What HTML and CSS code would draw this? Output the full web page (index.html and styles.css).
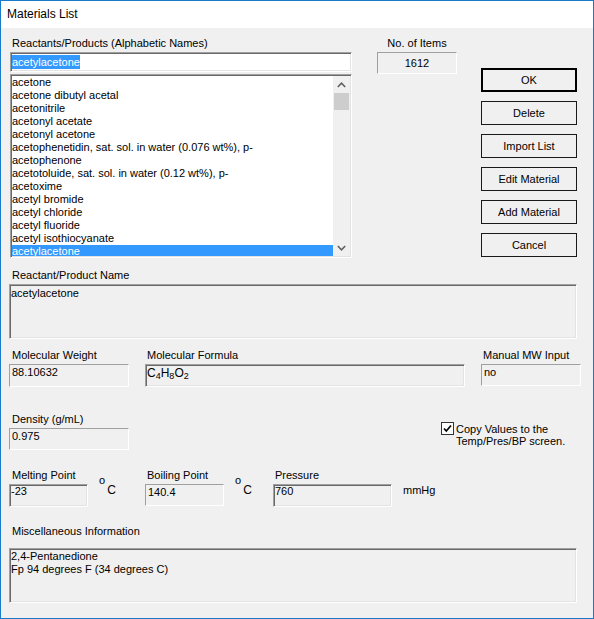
FILE: index.html
```html
<!DOCTYPE html>
<html>
<head>
<meta charset="utf-8">
<title>Materials List</title>
<link rel="stylesheet" href="styles.css">
</head>
<body>
<div class="window">
  <div class="titlebar">Materials List</div>
  <div class="content">
    <div class="top">
      <div class="listcol">
        <div class="lbl">Reactants/Products (Alphabetic Names)</div>
        <div class="combo-input sunken"><span class="sel">acetylacetone</span></div>
        <div class="list sunken">
          <div class="items">
            <div class="item">acetone</div>
            <div class="item">acetone dibutyl acetal</div>
            <div class="item">acetonitrile</div>
            <div class="item">acetonyl acetate</div>
            <div class="item">acetonyl acetone</div>
            <div class="item">acetophenetidin, sat. sol. in water (0.076 wt%), p-</div>
            <div class="item">acetophenone</div>
            <div class="item">acetotoluide, sat. sol. in water (0.12 wt%), p-</div>
            <div class="item">acetoxime</div>
            <div class="item">acetyl bromide</div>
            <div class="item">acetyl chloride</div>
            <div class="item">acetyl fluoride</div>
            <div class="item">acetyl isothiocyanate</div>
            <div class="item selected">acetylacetone</div>
          </div>
          <div class="scroll">
            <div class="sbtn"><svg width="9" height="6" viewBox="0 0 9 6"><polyline points="0.8,5 4.5,1.2 8.2,5" fill="none" stroke="#606060" stroke-width="1.6"/></svg></div>
            <div class="thumb"></div>
            <div class="track"></div>
            <div class="sbtn"><svg width="9" height="6" viewBox="0 0 9 6"><polyline points="0.8,1 4.5,4.8 8.2,1" fill="none" stroke="#606060" stroke-width="1.6"/></svg></div>
          </div>
        </div>
      </div>
      <div class="countcol">
        <div class="lbl center">No. of Items</div>
        <div class="countbox static">1612</div>
      </div>
      <div class="btncol">
        <div class="btn default">OK</div>
        <div class="btn">Delete</div>
        <div class="btn">Import List</div>
        <div class="btn">Edit Material</div>
        <div class="btn">Add Material</div>
        <div class="btn">Cancel</div>
      </div>
    </div>

    <div class="flabel name-lbl">Reactant/Product Name</div>
    <div class="bigbox sunken">acetylacetone</div>

    <div class="row row2">
      <div class="group w120">
        <div class="flabel">Molecular Weight</div>
        <div class="vbox static h23">88.10632</div>
      </div>
      <div class="group w320 ml16">
        <div class="flabel l2">Molecular Formula</div>
        <div class="vbox sunken h23 formula">C<sub>4</sub>H<sub>8</sub>O<sub>2</sub></div>
      </div>
      <div class="group w100 ml16">
        <div class="flabel l2">Manual MW Input</div>
        <div class="vbox static h22">no</div>
      </div>
    </div>

    <div class="row row3">
      <div class="group w120">
        <div class="flabel">Density (g/mL)</div>
        <div class="vbox static h22">0.975</div>
      </div>
      <div class="check">
        <svg class="cbox" width="13" height="13" viewBox="0 0 13 13"><rect x="0.5" y="0.5" width="12" height="12" fill="#fff" stroke="#333"/><polyline points="3,6.5 5.3,9 10,3.5" fill="none" stroke="#000" stroke-width="1.7"/></svg>
        <div class="ctext">Copy Values to the<br>Temp/Pres/BP screen.</div>
      </div>
    </div>

    <div class="row row4">
      <div class="group w79">
        <div class="flabel">Melting Point</div>
        <div class="vbox sunken h23 tight">-23</div>
      </div>
      <div class="unit u57"><span class="deg">o</span><span class="cc">C</span></div>
      <div class="group w79">
        <div class="flabel l2">Boiling Point</div>
        <div class="vbox static h22">140.4</div>
      </div>
      <div class="unit u49"><span class="deg">o</span><span class="cc">C</span></div>
      <div class="group w119">
        <div class="flabel l2">Pressure</div>
        <div class="vbox sunken h23 tight">760</div>
      </div>
      <div class="mmhg">mmHg</div>
    </div>

    <div class="flabel misc-lbl">Miscellaneous Information</div>
    <div class="bigbox sunken misc">2,4-Pentanedione<br>Fp 94 degrees F (34 degrees C)</div>
  </div>
</div>
</body>
</html>
```

FILE: styles.css
```css
* { box-sizing: border-box; }
body {
  margin: 0;
  font-family: "Liberation Sans", Arial, sans-serif;
  font-size: 11px;
  line-height: 13px;
  color: #000;
  background: #fff;
}
.window {
  width: 594px;
  height: 619px;
  border: 1px solid #1979ca;
  background: #f0f0f0;
  display: flex;
  flex-direction: column;
  overflow: hidden;
}
.titlebar {
  height: 27px;
  flex: none;
  background: #fff;
  padding-left: 6px;
  font-size: 12px;
  display: flex;
  align-items: center;
}
.content {
  flex: 1;
  padding-left: 8px;
}
.sunken {
  border: 1px solid;
  border-color: #a0a0a0 #fff #fff #a0a0a0;
  box-shadow: inset 1px 1px 0 #696969, inset -1px -1px 0 #e3e3e3;
  padding: 1px;
}
.static {
  border: 1px solid;
  border-color: #a0a0a0 #fff #fff #a0a0a0;
}
.top {
  display: flex;
  align-items: flex-start;
  margin-top: 9px;
}
.listcol {
  margin-left: 1px;
  width: 342px;
}
.lbl {
  height: 13px;
  padding-left: 2px;
  white-space: nowrap;
}
.lbl.center { text-align: center; padding-left: 0; }
.combo-input {
  margin-top: 2px;
  height: 20px;
  background: #fff;
  padding-top: 2px;
}
.sel {
  background: #3399ff;
  color: #fff;
  display: inline-block;
  line-height: 14px;
}
.list {
  margin-top: 2px;
  height: 184px;
  background: #fff;
  display: flex;
  overflow: hidden;
}
.items {
  flex: 1;
  overflow: hidden;
}
.item {
  height: 13px;
  white-space: nowrap;
  padding-left: 0;
}
.item.selected {
  background: #3399ff;
  color: #fff;
}
.scroll {
  width: 17px;
  flex: none;
  background: #f0f0f0;
  display: flex;
  flex-direction: column;
}
.sbtn {
  height: 17px;
  flex: none;
  display: flex;
  align-items: center;
  justify-content: center;
}
.thumb {
  height: 17px;
  flex: none;
  background: #cdcdcd;
  margin: 0 1px;
}
.track { flex: 1; }
.countcol {
  margin-left: 25px;
  width: 80px;
}
.countbox {
  margin-top: 2px;
  height: 22px;
  text-align: center;
  line-height: 20px;
}
.btncol {
  margin-left: 24px;
  padding-top: 31px;
  display: flex;
  flex-direction: column;
  gap: 9px;
}
.btn {
  width: 96px;
  height: 24px;
  border: 1px solid #1a1a1a;
  background: #f0f0f0;
  display: flex;
  align-items: center;
  justify-content: center;
}
.btn.default { border: 2px solid #000; }
.flabel {
  height: 13px;
  padding-left: 3px;
  white-space: nowrap;
}
.flabel.l2 { padding-left: 2px; }
.name-lbl { margin-top: 11px; }
.bigbox {
  margin-top: 2px;
  width: 568px;
  height: 55px;
  padding: 2px 1px 1px 1px;
}
.row {
  display: flex;
  align-items: flex-start;
}
.row2 { margin-top: 10px; }
.row3 { margin-top: 26px; }
.row4 { margin-top: 19px; }
.group { display: flex; flex-direction: column; flex: none; }
.w120 { width: 120px; }
.w320 { width: 320px; }
.w100 { width: 100px; }
.w79 { width: 79px; }
.w119 { width: 119px; }
.ml16 { margin-left: 16px; }
.vbox {
  margin-top: 2px;
  padding: 1px 2px 0 2px;
  white-space: nowrap;
}
.vbox.sunken { padding: 1px 1px 0 1px; }
.vbox.tight { padding-top: 0; }
.h23 { height: 23px; }
.h22 { height: 22px; }
.formula {
  font-size: 12px;
  line-height: 15px;
  padding-top: 3px;
}
.formula sub {
  font-size: 9px;
  line-height: 0;
  vertical-align: -2px;
}
.check {
  display: flex;
  align-items: flex-start;
  margin-left: 312px;
  margin-top: 9px;
}
.cbox { flex: none; }
.ctext {
  margin-left: 2px;
  line-height: 12px;
  margin-top: 1px;
}
.unit {
  display: flex;
  align-items: flex-start;
  padding-left: 11px;
  flex: none;
}
.u57 { width: 57px; }
.u49 { width: 49px; }
.deg { margin-top: 5px; }
.cc { margin-top: 15px; margin-left: 2px; font-size: 12px; }
.mmhg {
  margin-left: 11px;
  padding-top: 15px;
}
.misc-lbl { margin-top: 18px; }
.misc { margin-top: 10px; padding-top: 1px; }
```
